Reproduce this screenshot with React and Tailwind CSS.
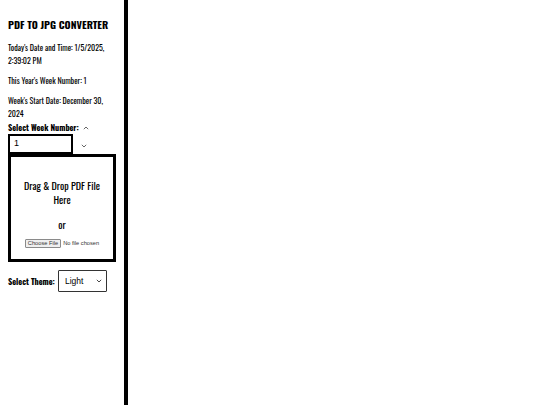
import React from "react";

const cond = { fontFamily: '"Oswald", "DejaVu Sans Condensed", "Liberation Sans Narrow", "DejaVu Sans", sans-serif' };
const arial = { fontFamily: '"Liberation Sans", Arial, sans-serif' };

function Chevron({ up = false, color = "#555" }) {
  return (
    <svg width="6" height="4" viewBox="0 0 6 4">
      <path d={up ? "M0.8 3.2 L3 1 L5.2 3.2" : "M0.8 0.8 L3 3 L5.2 0.8"} stroke={color} strokeWidth="0.9" fill="none" />
    </svg>
  );
}

export default function App() {
  return (
    <div className="flex h-[405px] w-[540px] bg-white text-black">
      <aside className="w-[128px] shrink-0 border-r-4 border-black px-2 pt-[18px]" style={cond}>
        <h1 className="whitespace-nowrap text-[10.4px] font-bold leading-[14px]">PDF TO JPG CONVERTER</h1>
        <p className="mt-[9px] text-[8px] leading-[13px] text-black">Today's Date and Time: 1/5/2025, 2:39:02 PM</p>
        <p className="mt-[7px] text-[8px] leading-[13px] text-black">This Year's Week Number: 1</p>
        <p className="mt-[7px] text-[8px] leading-[13px] text-black">Week's Start Date: December 30, 2024</p>
        <div className="mt-[1px] flex h-[13px] items-center">
          <span className="text-[8.2px] font-bold leading-[13px]">Select Week Number:</span>
          <span className="ml-[4px] mt-[1px] flex"><Chevron up /></span>
        </div>
        <div className="flex items-center">
          <div className="flex h-[20px] w-[65px] items-center border-2 border-black pl-[4px] text-[9px]" style={arial}>1</div>
          <span className="ml-[8px] mt-[3px] flex"><Chevron /></span>
        </div>
        <div className="flex h-[108px] w-[108px] flex-col items-center border-[3px] border-black px-[8px] pt-[22px]">
          <p className="text-center text-[10px] leading-[14px]">Drag &amp; Drop PDF File Here</p>
          <p className="mt-[11px] text-[10px] leading-[14px]">or</p>
          <div className="mt-[7px] flex items-center whitespace-nowrap text-[5.7px]" style={arial}>
            <span className="rounded-[1px] border border-[#8a8a8a] bg-[#efefef] px-[2px] leading-[7px] text-[#333]">Choose File</span>
            <span className="ml-[2px] text-[#333]">No file chosen</span>
          </div>
        </div>
        <div className="mt-[8px] flex items-center">
          <span className="text-[8.2px] font-bold">Select Theme:</span>
          <div className="ml-[3px] flex h-[22px] w-[49px] items-center justify-between rounded-[1px] border border-[#333] pl-[6px] pr-[4px] text-[8.5px]" style={arial}>
            <span>Light</span>
            <Chevron color="#333" />
          </div>
        </div>
      </aside>
      <main className="flex-1 bg-white" />
    </div>
  );
}
